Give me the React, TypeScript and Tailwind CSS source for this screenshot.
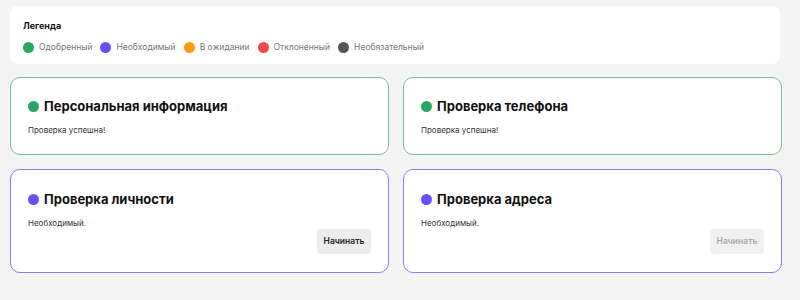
import React from "react";

const legend = [
  { c: "bg-[#2ba566]", t: "Одобренный" },
  { c: "bg-[#6c4ef5]", t: "Необходимый" },
  { c: "bg-[#ff9a0d]", t: "В ожидании" },
  { c: "bg-[#f04a4a]", t: "Отклоненный" },
  { c: "bg-[#555555]", t: "Необязательный" },
];

function Card({
  title,
  sub,
  green,
  button,
  disabled,
}: {
  title: string;
  sub: string;
  green?: boolean;
  button?: boolean;
  disabled?: boolean;
}) {
  return (
    <div
      className={
        "flex flex-col rounded-[10px] border bg-white px-[17px] " +
        (green ? "border-[#74c28f] pt-[18px] pb-[18px]" : "border-[#8c7df0] pt-[19px] pb-[18px]")
      }
    >
      <div className="flex h-[20px] items-center gap-[5px]">
        <span className={"h-[11px] w-[11px] rounded-full " + (green ? "bg-[#2ba566]" : "bg-[#6c4ef5]")} />
        <span className="text-[13px] font-bold leading-[20px] text-[#111111]">{title}</span>
      </div>
      <div className="mt-[8px] h-[12px] text-[8px] leading-[12px] text-[#333333]">{sub}</div>
      {button && (
        <div className="flex justify-end">
          <button
            className={
              "h-[25px] w-[54px] rounded-[4px] text-[8.5px] font-semibold " +
              (disabled ? "bg-[#f0f0f0] text-[#a8a8a8] font-medium" : "bg-[#ececec] text-[#222222]")
            }
          >
            Начинать
          </button>
        </div>
      )}
    </div>
  );
}

export default function App() {
  return (
    <div className="h-[300px] w-[800px] bg-[#f4f4f4] pt-[6px] pl-[10px]" style={{ fontFamily: "Inter, 'Noto Sans', sans-serif" }}>
      <div className="w-[770px] rounded-[8px] bg-white px-[13px] pt-[14px] pb-[10px]">
        <div className="text-[9px] font-bold leading-[12px] text-[#111111]">Легенда</div>
        <div className="mt-[8px] flex h-[14px] items-center gap-[8px]">
          {legend.map((l) => (
            <div key={l.t} className="flex items-center gap-[5px]">
              <span className={"h-[11px] w-[11px] rounded-full " + l.c} />
              <span className="text-[8.5px] leading-[14px] text-[#777777]">{l.t}</span>
            </div>
          ))}
        </div>
      </div>
      <div className="mt-[13px] grid w-[772px] grid-cols-2 gap-[14px]">
        <Card title="Персональная информация" sub="Проверка успешна!" green />
        <Card title="Проверка телефона" sub="Проверка успешна!" green />
        <Card title="Проверка личности" sub="Необходимый." button />
        <Card title="Проверка адреса" sub="Необходимый." button disabled />
      </div>
    </div>
  );
}
